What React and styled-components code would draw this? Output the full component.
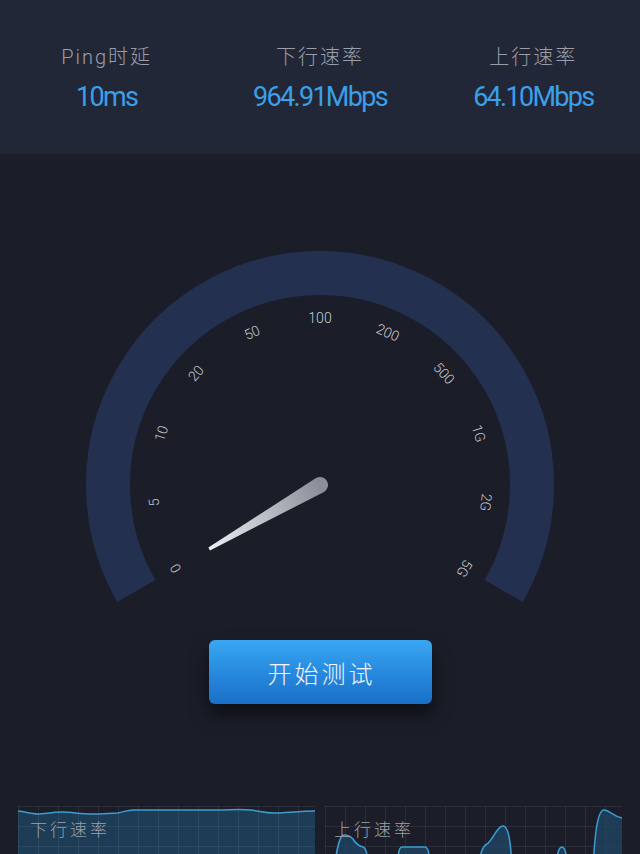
import React from 'react';
import styled, {createGlobalStyle} from 'styled-components';

const GlobalStyle = createGlobalStyle`
    html, body {
        margin: 0;
        padding: 0;
        background: #1b1e29;
        overflow: hidden;
    }
    body {
        font-family: "Roboto", "Noto Sans CJK SC", sans-serif;
    }
`;

const Page = styled.div`
    width: 640px;
    height: 854px;
    background: #1b1e29;
    display: flex;
    flex-direction: column;
    overflow: hidden;
    & > * {
        flex-shrink: 0;
    }
`;

const Header = styled.div`
    height: 154px;
    box-sizing: border-box;
    padding-top: 40px;
    background: #222737;
    display: grid;
    grid-template-columns: repeat(3, 1fr);
`;

const Stat = styled.div`
    display: flex;
    flex-direction: column;
    align-items: center;
    gap: 3px;
`;

const StatLabel = styled.div`
    font-family: "Roboto", "Noto Sans CJK SC", sans-serif;
    font-weight: 300;
    font-size: 20px;
    line-height: 34px;
    letter-spacing: 2px;
    color: #9a9ea9;
`;

const StatValue = styled.div`
    font-family: "Roboto", sans-serif;
    font-size: 27px;
    line-height: 40px;
    letter-spacing: -1.7px;
    color: #3b9fea;
`;

const GaugeSvg = styled.svg`
    display: block;
    width: 640px;
    height: 470px;
`;

const Tick = styled.text`
    font-family: "Roboto", sans-serif;
    font-weight: 300;
    font-size: 14px;
    fill: #c6cad2;
`;

const StartButton = styled.button`
    align-self: center;
    margin-top: 16px;
    width: 223px;
    height: 64px;
    border: none;
    border-radius: 6px;
    background: linear-gradient(180deg, #3aa7f3 0%, #278ade 50%, #1a6fc7 100%);
    box-shadow: 0 10px 18px rgba(0, 0, 0, 0.55);
    color: #f2f6fb;
    font-family: "Noto Sans CJK SC", sans-serif;
    font-weight: 300;
    font-size: 24px;
    letter-spacing: 3px;
    padding: 0 0 0 3px;
    cursor: pointer;
`;

const Charts = styled.div`
    margin-top: 102px;
    padding: 0 18px;
    display: grid;
    grid-template-columns: 1fr 1fr;
    gap: 10px;
`;

const Chart = styled.div`
    position: relative;
    height: 48px;
    overflow: hidden;
`;

const ChartSvg = styled.svg`
    display: block;
    width: 297px;
    height: 80px;
`;

const ChartLabel = styled.div`
    position: absolute;
    left: ${p => p.left}px;
    top: 10px;
    font-family: "Noto Sans CJK SC", sans-serif;
    font-weight: 300;
    font-size: 17px;
    letter-spacing: 3px;
    color: #9aa0ab;
`;

const cx = 320;
const cy = 331;
const ticks = ['0', '5', '10', '20', '50', '100', '200', '500', '1G', '2G', '5G'];

const polar = (r, deg) => {
    const a = deg * Math.PI / 180;
    return [cx + r * Math.sin(a), cy - r * Math.cos(a)];
};

const Gauge = () => {
    const [sx, sy] = polar(212, -120);
    const [ex, ey] = polar(212, 120);
    return (
        <GaugeSvg viewBox="0 0 640 470">
            <defs>
                <linearGradient id="needle" gradientUnits="userSpaceOnUse" x1="0" y1="0" x2="0" y2="-128">
                    <stop offset="0" stopColor="#8a8e98" />
                    <stop offset="1" stopColor="#eceff4" />
                </linearGradient>
            </defs>
            <path d={`M ${sx} ${sy} A 212 212 0 1 1 ${ex} ${ey}`} fill="none" stroke="#243050" strokeWidth="44" />
            {ticks.map((t, i) => {
                const deg = -120 + 24 * i;
                const [x, y] = polar(167, deg);
                return (
                    <Tick key={t} x={x} y={y} textAnchor="middle" dominantBaseline="central"
                        transform={`rotate(${deg} ${x} ${y})`}>{t}</Tick>
                );
            })}
            <g transform={`translate(${cx} ${cy}) rotate(-120)`}>
                <path d="M -8 0 L -1.6 -128 L 1.6 -128 L 8 0 A 8 8 0 0 1 -8 0 Z" fill="url(#needle)" />
            </g>
        </GaugeSvg>
    );
};

const Grid = () => {
    const lines = [];
    for (let x = 0; x <= 297; x += 20) lines.push(<line key={'v' + x} x1={x + 0.5} y1="0" x2={x + 0.5} y2="80" />);
    for (let y = 0; y <= 80; y += 20) lines.push(<line key={'h' + y} x1="0" y1={y + 0.5} x2="297" y2={y + 0.5} />);
    return <g stroke="rgba(255,255,255,0.07)" strokeWidth="1">{lines}</g>;
};

const downLine = 'M0 5 C 8 6, 14 8, 20 8 S 34 6, 44 6 S 62 8, 74 8 S 92 7, 100 7 C 106 6, 108 4, 116 4 L 200 4 C 212 4, 222 3, 232 4 S 246 7, 256 7 S 282 5, 297 5';
const upLine = 'M0 80 L 8 80 C 10 50, 14 29, 19 29 C 23 29, 25 30, 28 33 C 31 38, 34 40, 38 41 C 41 42, 43 46, 45 80 L 72 80 C 73 50, 73 41, 77 41 L 100 41 C 104 41, 105 50, 105 80 L 153 80 C 154 44, 158 40, 162 38 C 168 34, 172 20, 178 20 C 183 20, 186 30, 188 80 L 229 80 C 231 46, 234 41, 237 41 C 240 41, 242 46, 244 80 L 267 80 C 269 40, 271 4, 279 4 C 284 4, 288 10, 297 12';

const App = () => (
    <>
        <GlobalStyle />
        <Page>
            <Header>
                <Stat>
                    <StatLabel>Ping时延</StatLabel>
                    <StatValue>10ms</StatValue>
                </Stat>
                <Stat>
                    <StatLabel>下行速率</StatLabel>
                    <StatValue>964.91Mbps</StatValue>
                </Stat>
                <Stat>
                    <StatLabel>上行速率</StatLabel>
                    <StatValue>64.10Mbps</StatValue>
                </Stat>
            </Header>
            <Gauge />
            <StartButton>开始测试</StartButton>
            <Charts>
                <Chart>
                    <ChartSvg viewBox="0 0 297 80">
                        <path d={downLine + ' L 297 80 L 0 80 Z'} fill="#1d3c55" />
                        <Grid />
                        <path d={downLine} fill="none" stroke="#3d9dd0" strokeWidth="1.5" />
                    </ChartSvg>
                    <ChartLabel left={12}>下行速率</ChartLabel>
                </Chart>
                <Chart>
                    <ChartSvg viewBox="0 0 297 80">
                        <Grid />
                        <path d={upLine + ' L 297 80 Z'} fill="rgba(32,72,104,0.7)" />
                        <path d={upLine} fill="none" stroke="#3b9dd2" strokeWidth="1.5" />
                    </ChartSvg>
                    <ChartLabel left={9}>上行速率</ChartLabel>
                </Chart>
            </Charts>
        </Page>
    </>
);

export default App;
